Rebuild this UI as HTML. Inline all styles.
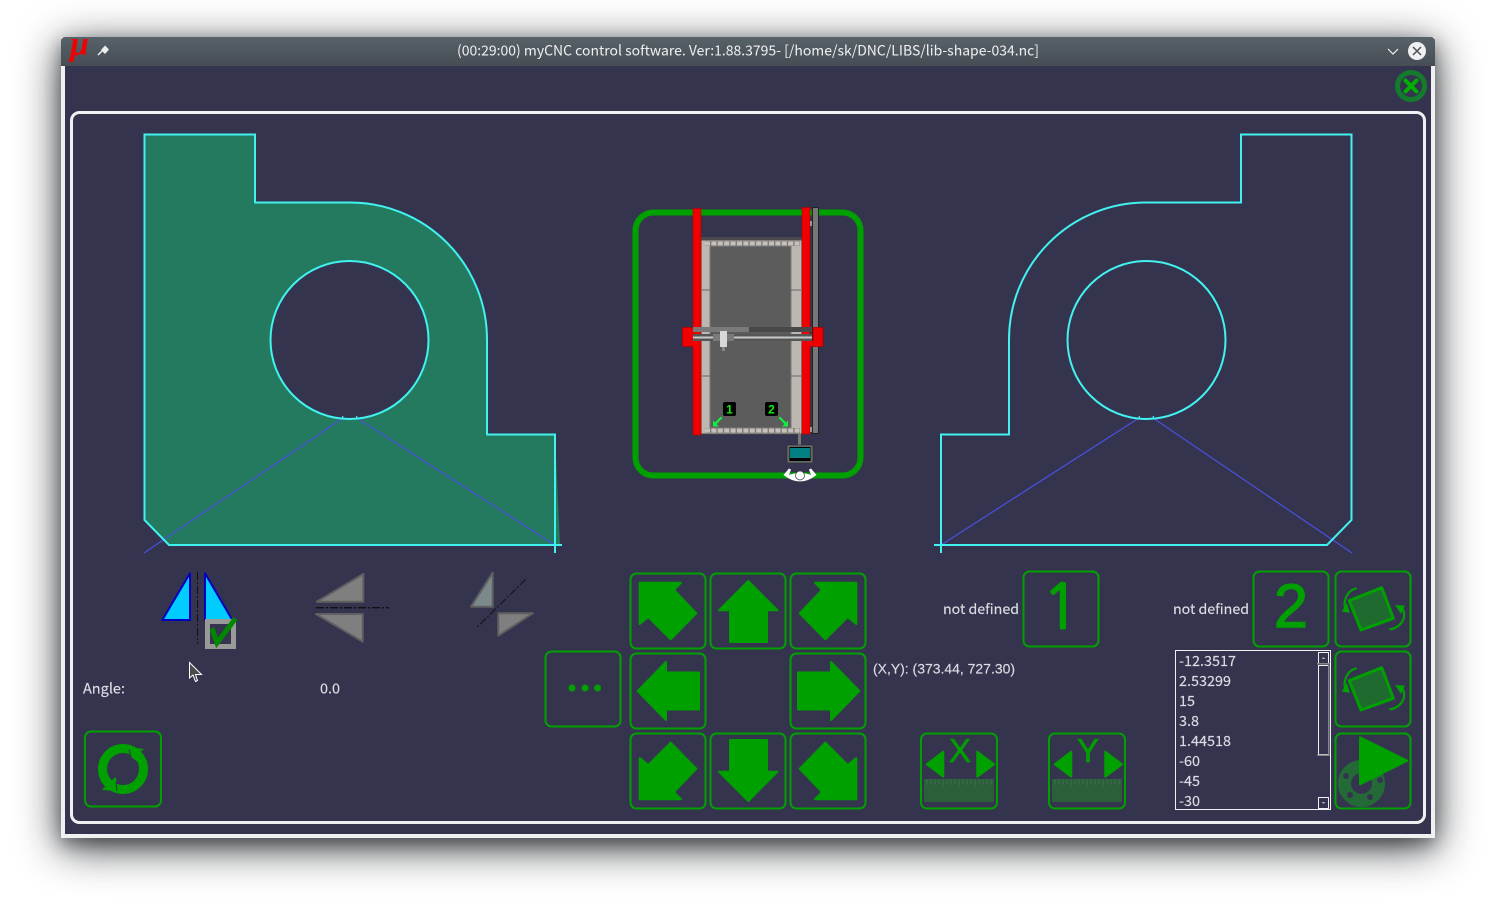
<!DOCTYPE html>
<html><head><meta charset="utf-8"><title>myCNC</title>
<style>
html,body{margin:0;padding:0;background:#fff;width:1496px;height:899px;overflow:hidden}
#win{position:absolute;left:61px;top:37px;width:1374px;height:801px;border-radius:4px 4px 0 0;box-shadow:0 9px 42px rgba(15,20,25,.85),0 6px 16px rgba(15,20,25,.35)}
svg{position:absolute;left:0;top:0}
text{font-family:"Noto Sans CJK SC","Liberation Sans",sans-serif;font-size:14px;fill:#dcdde3;stroke:#dcdde3;stroke-width:.15}
.b{fill:none;stroke:#00a000;stroke-width:2}
.a{fill:#00a000;stroke:#00a000;stroke-width:2;stroke-linejoin:round}
.c{fill:none;stroke:#42f2f0;stroke-width:2}
.l{fill:none;stroke:#4a50e0;stroke-width:1.2}
</style></head><body>
<div id="win"></div>
<svg width="1496" height="899" viewBox="0 0 1496 899">
<defs>
<linearGradient id="tb" x1="0" y1="0" x2="0" y2="1"><stop offset="0" stop-color="#586269"/><stop offset="1" stop-color="#464d54"/></linearGradient>
<g id="rot"><path d="M1381.7 587.7L1393.3 618.3L1361 630L1349.3 600.7Z" fill="#1f6b2f" stroke="#00a000" stroke-width="3" stroke-linejoin="round"/>
<path d="M1356.700 588.300C1347 590 1342 602 1346 611" fill="none" stroke="#00a000" stroke-width="2.200"/><path d="M1341.700 611.500L1350 613L1347 603Z" fill="#00a000"/>
<path d="M1389.300 629.300C1399 629 1409 618 1401.500 607" fill="none" stroke="#00a000" stroke-width="2.200"/><path d="M1395 605L1405 605.500L1401 614Z" fill="#00a000"/></g>
<g id="xb"><rect x="921" y="733.500" width="76" height="75" rx="6" class="b"/><path d="M926.700 764.300L943.300 751.700V776.700Z" class="a"/><path d="M994 764.300L977.300 751.700V776.700Z" class="a"/><rect x="924" y="779" width="70" height="23" rx="1" fill="#2b5e3a"/>
<path d="M927 779v6M931 779v5M935 779v6M939 779v5M943 779v8M947 779v5M951 779v6M955 779v5M959 779v8M963 779v5M967 779v6M971 779v5M975 779v8M979 779v5M983 779v6M987 779v5M991 779v6" stroke="#3a7049" stroke-width="1"/></g>
</defs>
<!-- window -->
<rect x="61" y="37" width="1374" height="801" fill="#eff0f1"/>
<path d="M61 66V41a4 4 0 0 1 4-4H1431a4 4 0 0 1 4 4V66Z" fill="url(#tb)"/>
<rect x="65" y="66" width="1366" height="768" fill="#35344f"/>
<text x="70" y="55" style="font-family:'Liberation Serif',serif;font-size:34px;font-style:italic;font-weight:bold;fill:#f00000;stroke:none">μ</text>
<path d="M98 55L102 51" stroke="#eee" stroke-width="1.500"/><path d="M101 50L105 45.500L109 49.500L105 54Z" fill="#eee"/>
<text x="748" y="55.500" text-anchor="middle" textLength="582" lengthAdjust="spacingAndGlyphs" style="fill:#eff0f1;stroke:none">(00:29:00) myCNC control software. Ver:1.88.3795- [/home/sk/DNC/LIBS/lib-shape-034.nc]</text>
<path d="M1388 49L1393 54L1398 49" fill="none" stroke="#eff0f1" stroke-width="1.200"/>
<circle cx="1417" cy="51" r="9" fill="#eff0f1"/><path d="M1413 47L1421 55M1421 47L1413 55" stroke="#4a5158" stroke-width="1.500"/>
<circle cx="1411" cy="86" r="13.500" fill="none" stroke="#147a2c" stroke-width="5"/><path d="M1405.500 80.500L1416.500 91.500M1416.500 80.500L1405.500 91.500" stroke="#00b000" stroke-width="4" stroke-linecap="round"/>
<rect x="71.500" y="112.500" width="1353" height="710" rx="8" fill="none" stroke="#eff0f1" stroke-width="3"/>

<!-- left shape -->
<path d="M144.500 134.500H255V202.500H350A137 137 0 0 1 487 340V434.500H555L560 545H169L144.500 520ZM349.500 261a79 79 0 1 0 .01 0Z" fill="#247a5e" fill-rule="evenodd"/>
<path d="M144 553L343 418M555 545L357 418" class="l"/>
<path d="M555 553V434.500H487V340A137 137 0 0 0 350 202.500H255V134.500H144.500V520L169 545H562" class="c"/>
<circle cx="349.500" cy="340" r="79" class="c"/>
<path d="M342.700 416v2.500M356.700 416v2.500" stroke="#42f2f0" stroke-width="1.200"/>
<!-- right shape -->
<path d="M1153 418L1352 553M1139 418L941 545" class="l"/>
<path d="M941 553V434.500H1009V340A137 137 0 0 1 1146 202.500H1241V134.500H1351.500V520L1327 545H934" class="c"/>
<circle cx="1146.500" cy="340" r="79" class="c"/>
<path d="M1139.300 416v2.500M1153.300 416v2.500" stroke="#42f2f0" stroke-width="1.200"/>

<!-- machine -->
<rect x="635.500" y="212.500" width="225" height="263" rx="18" fill="none" stroke="#00a000" stroke-width="6"/>
<rect x="701" y="238" width="101" height="196" fill="#bdb7b2" stroke="#444" stroke-width="1"/>
<rect x="701" y="237" width="101" height="3.500" fill="#4a4a4e"/>
<path d="M705 243.500H800M705 430.500H800" stroke="#7e7c7a" stroke-width="5"/>
<path d="M705 243.500H800M705 430.500H800" stroke="#c6c0bb" stroke-width="4.200" stroke-dasharray="5 1.400"/>
<rect x="710" y="246" width="81" height="182" fill="#5c5c5c" stroke="#7a7a7a" stroke-width="1"/>
<path d="M702 290H710M791 290H801M702 376H710M791 376H801" stroke="#666" stroke-width="1"/>
<rect x="693" y="208.500" width="8" height="226.500" fill="#f00000" stroke="#a00" stroke-width=".6"/>
<rect x="802" y="207.500" width="8" height="226.500" fill="#f00000" stroke="#a00" stroke-width=".6"/>
<rect x="810" y="221" width="2" height="5" fill="#999"/><rect x="810" y="427" width="2" height="5" fill="#999"/>
<rect x="812.500" y="207.500" width="6" height="226" fill="#777" stroke="#222" stroke-width="1"/>
<rect x="682.500" y="327.500" width="11" height="19" fill="#f00000" stroke="#a00" stroke-width=".8"/><rect x="693" y="341" width="5" height="5.500" fill="#f00000"/>
<rect x="813" y="327.500" width="10" height="19" fill="#f00000" stroke="#a00" stroke-width=".8"/><rect x="802" y="341" width="11" height="5.500" fill="#f00000"/>
<rect x="693" y="327" width="56" height="5" fill="#7a7a7a"/><rect x="749" y="327" width="63" height="5" fill="#484848"/>
<rect x="693" y="334" width="119" height="7" fill="#555"/><rect x="693" y="336.500" width="119" height="2" fill="#c8c8c8"/>
<rect x="713" y="334" width="21" height="7" fill="#7a7a7a"/>
<rect x="720" y="331" width="7" height="16" fill="#d8d8d8"/><rect x="722" y="347" width="3" height="4" fill="#888"/>
<rect x="723" y="402" width="13" height="14" rx="2" fill="#000"/><rect x="765" y="402" width="13" height="14" rx="2" fill="#000"/>
<text x="729.500" y="413.500" text-anchor="middle" style="font-family:'Liberation Sans',sans-serif;font-size:12px;font-weight:bold;fill:#10f010;stroke:none">1</text>
<text x="771.500" y="413.500" text-anchor="middle" style="font-family:'Liberation Sans',sans-serif;font-size:12px;font-weight:bold;fill:#10f010;stroke:none">2</text>
<path d="M721.700 417.300L714 425" stroke="#10f040" stroke-width="2.200"/><path d="M713 426.500L713 420.500L719 426.500Z" fill="#10f040"/>
<path d="M779.300 417.300L787 425" stroke="#10f040" stroke-width="2.200"/><path d="M788 426.500L788 420.500L782 426.500Z" fill="#10f040"/>
<rect x="798" y="434" width="3" height="11" fill="#777"/>
<rect x="787" y="445" width="26" height="18" fill="#666" stroke="#333" stroke-width=".6"/><rect x="789.500" y="447" width="21" height="14" fill="#000"/><rect x="790" y="448" width="20" height="10" fill="#008080"/>
<path d="M783.500 475Q800 488 816.500 475L811 468.500L809 469.500L811 475Q800 471 789 475L791 469.500L789 468.500Z" fill="#fff"/>
<circle cx="800" cy="475.500" r="4.500" fill="#fff" stroke="#35344f" stroke-width=".7"/>

<!-- mirror icons -->
<path d="M190 573.300V620H162.300Z" fill="#00ccff" stroke="#0000c0" stroke-width="2" stroke-linejoin="round"/>
<path d="M205 573.300V620H232.300Z" fill="#00ccff" stroke="#0000c0" stroke-width="2" stroke-linejoin="round"/>
<path d="M197.500 572V644" stroke="#111" stroke-width="1" stroke-dasharray="8 2 2 2"/>
<rect x="207.500" y="621.500" width="26" height="25" fill="#35344f" stroke="#999" stroke-width="5"/>
<path d="M212 628.500L217 643L235.500 618.500" fill="none" stroke="#008800" stroke-width="5"/>
<path d="M363.300 574V601.700H316.700Z" fill="#7f7f7f" stroke="#606060" stroke-width="2" stroke-linejoin="round"/>
<path d="M362.700 614V641.700L316 614Z" fill="#7f7f7f" stroke="#606060" stroke-width="2" stroke-linejoin="round"/>
<path d="M316 607.700H389" stroke="#111" stroke-width="1.300" stroke-dasharray="8 2 2 2"/>
<path d="M492.700 572.700V606.700H471Z" fill="#7a8a8a" stroke="#606060" stroke-width="2" stroke-linejoin="round"/>
<path d="M498.300 613.300H532.700L498.300 635.700Z" fill="#7f7f7f" stroke="#606060" stroke-width="2" stroke-linejoin="round"/>
<path d="M525.700 579.300L476 628.300" stroke="#111" stroke-width="1" stroke-dasharray="8 2 2 2"/>
<path d="M189.500 662.500V678L193 675L195.500 681.500L197.500 680.500L195.500 674.500H201.500Z" fill="#4a4a4a" stroke="#fff" stroke-width="1"/>
<text x="83" y="693.500" textLength="42" lengthAdjust="spacingAndGlyphs">Angle:</text>
<text x="320" y="693.500" textLength="20" lengthAdjust="spacingAndGlyphs">0.0</text>
<rect x="85" y="731.500" width="76" height="75" rx="6" class="b"/>
<circle cx="123" cy="769" r="20.500" fill="none" stroke="#00a000" stroke-width="9"/>
<path d="M130 747L144 749L139 753V763L131 757Z" fill="#00a000"/><path d="M129 749.500L131 757.500" stroke="#35344f" stroke-width="1"/>
<path d="M102 790L117 791L116 777L108 783Z" fill="#00a000"/><path d="M117 791L116 782" stroke="#35344f" stroke-width="1"/>

<!-- arrows -->
<rect x="630.500" y="573.500" width="75" height="75" rx="6" class="b"/><rect x="710.500" y="573.500" width="75" height="75" rx="6" class="b"/><rect x="790.500" y="573.500" width="75" height="75" rx="6" class="b"/>
<rect x="630.500" y="653.500" width="75" height="75" rx="6" class="b"/><rect x="790.500" y="653.500" width="75" height="75" rx="6" class="b"/>
<rect x="630.500" y="733.500" width="75" height="75" rx="6" class="b"/><rect x="710.500" y="733.500" width="75" height="75" rx="6" class="b"/><rect x="790.500" y="733.500" width="75" height="75" rx="6" class="b"/>
<rect x="545.500" y="651.500" width="75" height="75" rx="6" class="b"/>
<circle cx="572" cy="688" r="3.500" fill="#00a000"/><circle cx="585" cy="688" r="3.500" fill="#00a000"/><circle cx="597.500" cy="688" r="3.500" fill="#00a000"/>
<path d="M639.700 582.700H681L674 590L696.300 613.300L670.700 639.300L648.300 617L639.700 624Z" class="a"/>
<path d="M856.300 582.700H815L822 590L799.700 613.300L825.300 639.300L847.700 617L856.300 624Z" class="a"/>
<path d="M639.700 799.300H681L674 792L696.300 768.700L670.700 742.700L648.300 765L639.700 758Z" class="a"/>
<path d="M856.300 799.300H815L822 792L799.700 768.700L825.300 742.700L847.700 765L856.300 758Z" class="a"/>
<path d="M748.300 581L777.500 610.300H767V642H730V610.300H719Z" class="a"/>
<path d="M748.300 801L777.500 771.700H767V740H730V771.700H719Z" class="a"/>
<path d="M637.700 691L666 662V672.500H699V709.500H666V720Z" class="a"/>
<path d="M859.300 691L831 662V672.500H798V709.500H831V720Z" class="a"/>

<!-- slots -->
<text x="943" y="614" textLength="76" lengthAdjust="spacingAndGlyphs">not defined</text>
<text x="1173" y="614" textLength="76" lengthAdjust="spacingAndGlyphs">not defined</text>
<rect x="1023.500" y="571.500" width="75" height="75" rx="6" class="b"/><rect x="1253.500" y="571.500" width="75" height="75" rx="6" class="b"/>
<text x="1061" y="628.500" text-anchor="middle" style="font-family:'NanumGothic','Liberation Sans',sans-serif;font-size:61px;fill:#00a000;stroke:#00a000;stroke-width:2">1</text>
<text x="1291" y="627" text-anchor="middle" style="font-family:'Liberation Sans',sans-serif;font-size:61px;fill:#00a000;stroke:#00a000;stroke-width:1.400">2</text>
<text x="873" y="673.500" textLength="142" lengthAdjust="spacingAndGlyphs" style="font-family:'Liberation Sans',sans-serif">(X,Y): (373.44, 727.30)</text>
<use href="#xb"/><use href="#xb" x="128"/>
<text x="960" y="762" text-anchor="middle" style="font-family:'Liberation Sans',sans-serif;font-size:33px;fill:#00a000;stroke:#00a000;stroke-width:.6">X</text>
<text x="1088" y="762" text-anchor="middle" style="font-family:'Liberation Sans',sans-serif;font-size:33px;fill:#00a000;stroke:#00a000;stroke-width:.6">Y</text>

<!-- right buttons -->
<rect x="1335.500" y="571.500" width="75" height="75" rx="6" class="b"/><rect x="1335.500" y="651.500" width="75" height="75" rx="6" class="b"/><rect x="1335.500" y="733.500" width="75" height="75" rx="6" class="b"/>
<use href="#rot"/><use href="#rot" y="80"/>
<circle cx="1361.500" cy="783.500" r="17" fill="none" stroke="#246a36" stroke-width="13"/>
<circle cx="1346" cy="776" r="3" fill="#35344f"/><circle cx="1380" cy="780" r="3" fill="#35344f"/><circle cx="1350" cy="795" r="3" fill="#35344f"/><circle cx="1370" cy="797" r="3" fill="#35344f"/>
<path d="M1360 737.300L1407.300 760.700L1360 784.300Z" class="a"/>

<!-- list -->
<rect x="1175.500" y="650.500" width="155" height="159" fill="none" stroke="#eff0f1" stroke-width="1"/>
<g><text x="1179" y="666" textLength="57" lengthAdjust="spacingAndGlyphs">-12.3517</text><text x="1179" y="686" textLength="52" lengthAdjust="spacingAndGlyphs">2.53299</text><text x="1179" y="706" textLength="16" lengthAdjust="spacingAndGlyphs">15</text><text x="1179" y="726" textLength="20" lengthAdjust="spacingAndGlyphs">3.8</text><text x="1179" y="746" textLength="52" lengthAdjust="spacingAndGlyphs">1.44518</text><text x="1179" y="766" textLength="21" lengthAdjust="spacingAndGlyphs">-60</text><text x="1179" y="786" textLength="21" lengthAdjust="spacingAndGlyphs">-45</text><text x="1179" y="806" textLength="21" lengthAdjust="spacingAndGlyphs">-30</text></g>
<rect x="1318.500" y="652.500" width="10" height="11" fill="none" stroke="#eff0f1" stroke-width="1"/><rect x="1317" y="663" width="13" height="1.500" fill="#888"/>
<path d="M1321.500 659L1323.500 657L1325.500 659Z" fill="#aaa"/>
<rect x="1318.500" y="665.500" width="10" height="89" fill="none" stroke="#eff0f1" stroke-width="1"/><rect x="1317" y="754.500" width="13" height="1.500" fill="#888"/><rect x="1328" y="665" width="1.500" height="90" fill="#888"/>
<rect x="1318.500" y="797.500" width="10" height="11" fill="none" stroke="#eff0f1" stroke-width="1"/>
<path d="M1321.500 802L1323.500 804L1325.500 802Z" fill="#aaa"/>
</svg>
</body></html>
